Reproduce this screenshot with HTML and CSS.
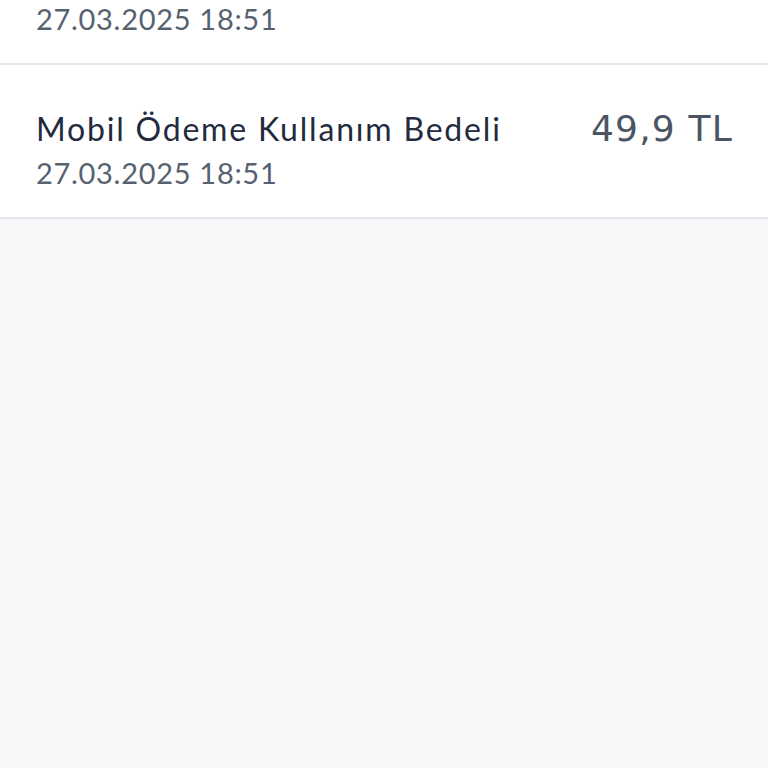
FILE: index.html
```html
<!DOCTYPE html>
<html lang="tr">
<head>
  <meta charset="UTF-8">
  <meta name="viewport" content="width=device-width, initial-scale=1.0">
  <title>Hareketler</title>
  <link rel="stylesheet" href="styles.css">
</head>
<body>
  <ul class="tx-list">
    <li class="tx-row">
      <div class="tx-info">
        <span class="tx-title">Mobil Ödeme Kullanım Bedeli</span>
        <span class="tx-date">27.03.2025 18:51</span>
      </div>
      <span class="tx-amount">49,9 TL</span>
    </li>
    <li class="tx-row">
      <div class="tx-info">
        <span class="tx-title">Mobil Ödeme Kullanım Bedeli</span>
        <span class="tx-date">27.03.2025 18:51</span>
      </div>
      <span class="tx-amount">49,9 TL</span>
    </li>
  </ul>
</body>
</html>
```

FILE: styles.css
```css
html, body {
  margin: 0;
  padding: 0;
}

body {
  background-color: #f7f8fa;
  font-family: Lato, "Noto Sans", sans-serif;
  height: 768px;
  overflow: hidden;
}

.tx-list {
  list-style: none;
  margin: -89px 0 0 0;
  padding: 0;
}

.tx-row {
  background-color: #fff;
  border-bottom: 2px solid #e6e7ea;
  display: flex;
  justify-content: space-between;
  align-items: flex-start;
  height: 154px;
  box-sizing: border-box;
  padding: 44px 35px 0 36px;
}

.tx-info {
  display: flex;
  flex-direction: column;
}

.tx-title {
  color: #232a3d;
  font-size: 32px;
  line-height: 40px;
  letter-spacing: 1.8px;
}

.tx-date {
  color: #576270;
  font-size: 29px;
  line-height: 40px;
  letter-spacing: 0.7px;
  margin-top: 4px;
}

.tx-amount {
  color: #4a5563;
  font-family: "DejaVu Sans", "Liberation Sans", sans-serif;
  font-size: 36px;
  line-height: 40px;
  letter-spacing: 1.2px;
}
```
